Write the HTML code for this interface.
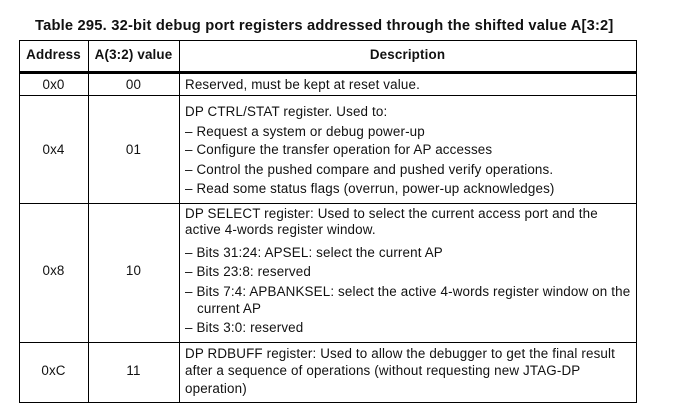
<!DOCTYPE html>
<html><head><meta charset="utf-8"><style>
body{margin:0;width:676px;height:418px;background:#fff;position:relative;overflow:hidden;font-family:"Liberation Sans",Arial,sans-serif;color:#111}
.t{position:absolute;white-space:nowrap;font-size:13.4px;line-height:16px;letter-spacing:0.15px}
.c{text-align:center}
.h{position:absolute;background:#000;height:1px}
.v{position:absolute;background:#000;width:1px}
</style></head><body>
<div class="t" style="left:35px;top:18px;font-weight:bold;font-size:14.7px;letter-spacing:0.2px">Table 295. 32-bit debug port registers addressed through the shifted value A[3:2]</div>
<div class="h" style="left:19px;width:618px;top:40px"></div>
<div class="h" style="left:19px;width:618px;top:71px;height:3px"></div>
<div class="h" style="left:19px;width:618px;top:95px"></div>
<div class="h" style="left:19px;width:618px;top:203px"></div>
<div class="h" style="left:19px;width:618px;top:342px"></div>
<div class="h" style="left:19px;width:618px;top:402px"></div>
<div class="v" style="left:19px;top:40px;height:363px"></div>
<div class="v" style="left:88px;top:40px;height:363px"></div>
<div class="v" style="left:179px;top:40px;height:363px"></div>
<div class="v" style="left:636px;top:40px;height:363px"></div>

<div class="t c" style="left:19px;width:69px;top:47px;font-weight:bold">Address</div>
<div class="t c" style="left:88px;width:91px;top:47px;font-weight:bold">A(3:2) value</div>
<div class="t c" style="left:179px;width:457px;top:47px;font-weight:bold">Description</div>

<div class="t c" style="left:19px;width:69px;top:77px">0x0</div>
<div class="t c" style="left:88px;width:91px;top:77px">00</div>
<div class="t" style="left:185px;top:77px">Reserved, must be kept at reset value.</div>

<div class="t c" style="left:19px;width:69px;top:142px">0x4</div>
<div class="t c" style="left:88px;width:91px;top:142px">01</div>
<div class="t" style="left:185px;top:104px">DP CTRL/STAT register. Used to:</div>
<div class="t" style="left:185px;top:124px">– Request a system or debug power-up</div>
<div class="t" style="left:185px;top:142px">– Configure the transfer operation for AP accesses</div>
<div class="t" style="left:185px;top:162px">– Control the pushed compare and pushed verify operations.</div>
<div class="t" style="left:185px;top:181px">– Read some status flags (overrun, power-up acknowledges)</div>

<div class="t c" style="left:19px;width:69px;top:263px">0x8</div>
<div class="t c" style="left:88px;width:91px;top:263px">10</div>
<div class="t" style="left:185px;top:206px">DP SELECT register: Used to select the current access port and the</div>
<div class="t" style="left:185px;top:222px">active 4-words register window.</div>
<div class="t" style="left:185px;top:245px">– Bits 31:24: APSEL: select the current AP</div>
<div class="t" style="left:185px;top:264px">– Bits 23:8: reserved</div>
<div class="t" style="left:185px;top:284px">– Bits 7:4: APBANKSEL: select the active 4-words register window on the</div>
<div class="t" style="left:197px;top:301px">current AP</div>
<div class="t" style="left:185px;top:320px">– Bits 3:0: reserved</div>

<div class="t c" style="left:19px;width:69px;top:363px">0xC</div>
<div class="t c" style="left:88px;width:91px;top:363px">11</div>
<div class="t" style="left:185px;top:346px">DP RDBUFF register: Used to allow the debugger to get the final result</div>
<div class="t" style="left:185px;top:363px">after a sequence of operations (without requesting new JTAG-DP</div>
<div class="t" style="left:185px;top:381px">operation)</div>
</body></html>
